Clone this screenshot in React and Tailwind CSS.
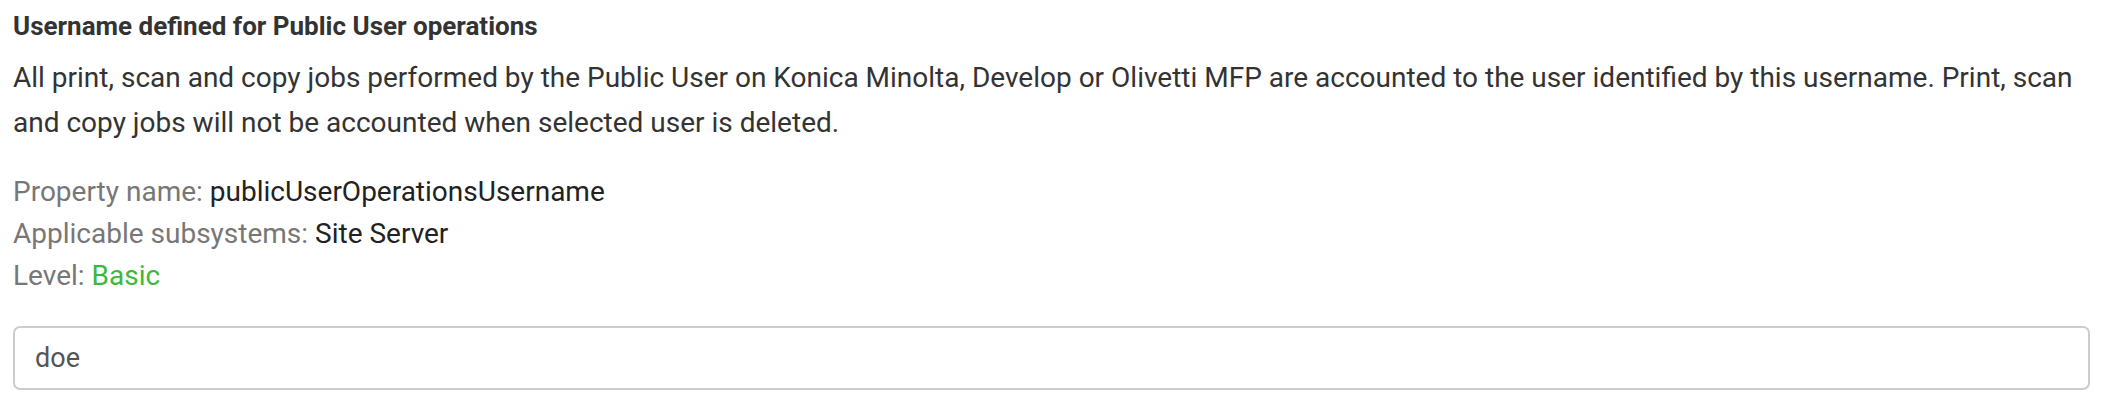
export default function App() {
  return (
    <div
      className="bg-white pl-[13px] pr-[20px] pt-[10px] text-[#333]"
      style={{ fontFamily: 'Roboto, "Liberation Sans", sans-serif' }}
    >
      <h3 className="text-[26px] font-bold leading-[32px] text-[#333]">
        Username defined for Public User operations
      </h3>
      <p className="mt-[14px] text-[28px] leading-[44.5px]">
        All print, scan and copy jobs performed by the Public User on Konica Minolta, Develop or
        Olivetti MFP are accounted to the user identified by this username. Print, scan and copy
        jobs will not be accounted when selected user is deleted.
      </p>
      <div className="mt-[26px] text-[28px] leading-[42px]">
        <div>
          <span className="text-[#777]">Property name: </span>
          <span className="text-[#222]">publicUserOperationsUsername</span>
        </div>
        <div>
          <span className="text-[#777]">Applicable subsystems: </span>
          <span className="text-[#222]">Site Server</span>
        </div>
        <div>
          <span className="text-[#777]">Level: </span>
          <span className="text-[#3db83d]">Basic</span>
        </div>
      </div>
      <input
        type="text"
        defaultValue="doe"
        className="mt-[29px] block h-[64px] w-full rounded-[7px] border-2 border-[#cccccc] bg-white px-[20px] text-[27px] text-[#555] outline-none"
      />
    </div>
  );
}
